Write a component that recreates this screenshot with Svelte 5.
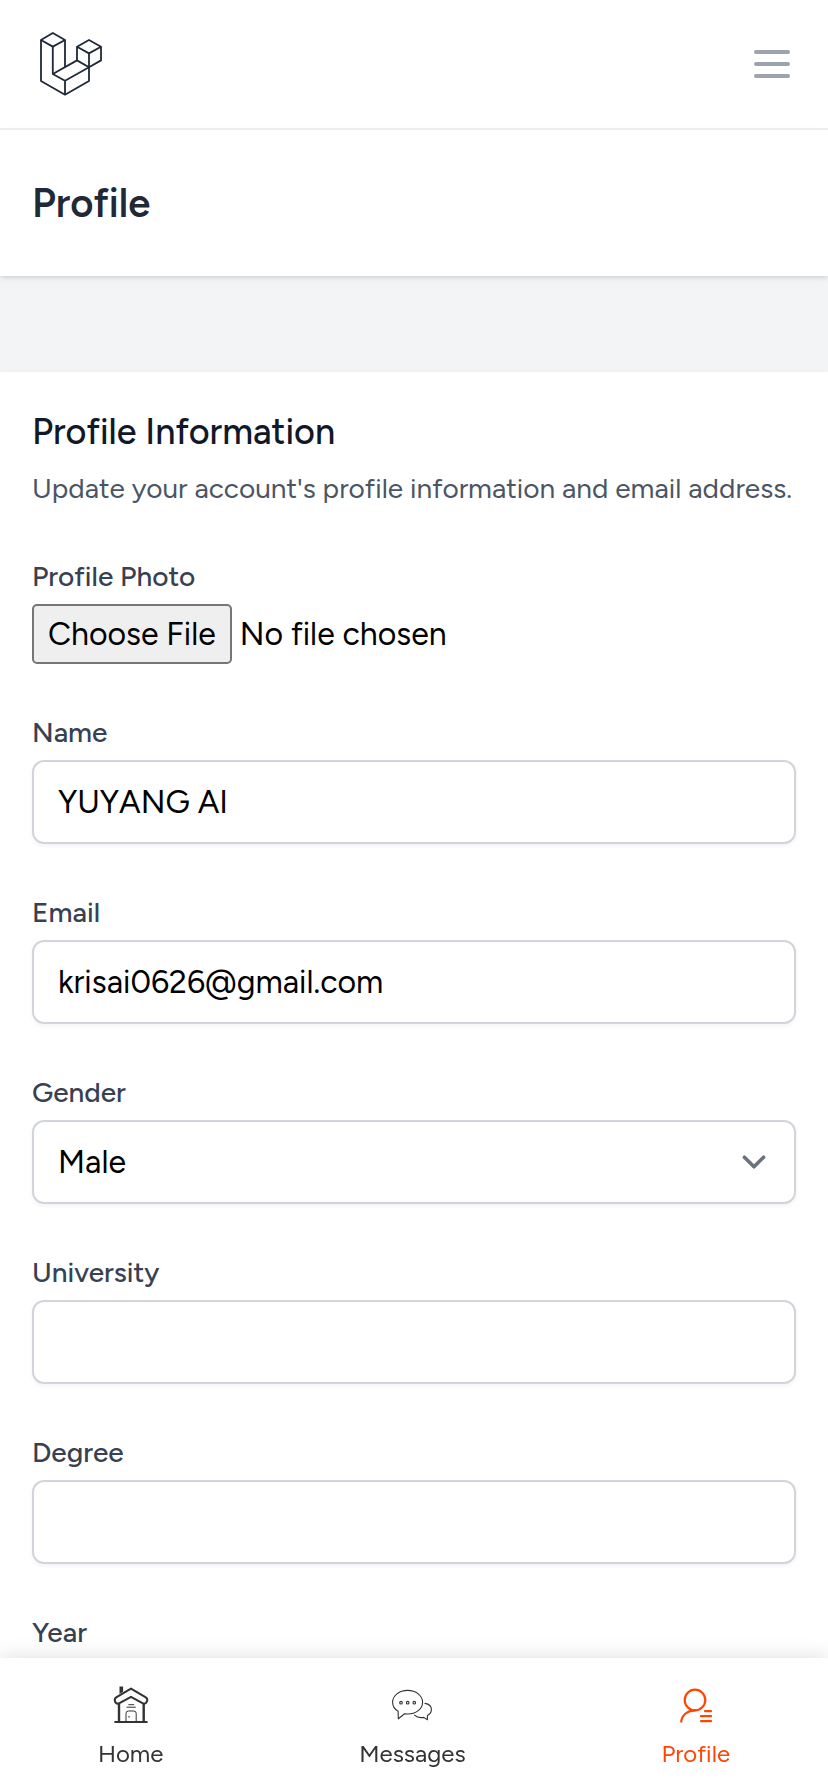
<script>
    let menuOpen = false;

    let name = "YUYANG AI";
    let email = "krisai0626@gmail.com";
    let gender = "Male";
    let university = "";
    let degree = "";
    let year = "";

    function toggleMenu() {
        menuOpen = !menuOpen;
    }
</script>

<div class="page">
    <nav class="topNav">
        <a class="logo" href="/" aria-label="Dashboard">
            <svg viewBox="0 0 72 72" width="72" height="72" fill="none" stroke="#1f2937" stroke-width="1.8" stroke-linejoin="round">
                <path d="M9 12 L20.8 5 L33 12 L20.8 18.6 Z" />
                <path d="M9 12 V53 L33 66.7 L57 53 V39.2" />
                <path d="M20.8 18.6 V46 L33 52.8 V66.7" />
                <path d="M33 12 V39" />
                <path d="M20.8 46 L45 32.4 L57 39.2 L33 52.8" />
                <path d="M45 32.4 V18.8 L57 12 L69 18.8 V32.4 L57 39.2 V25.4" />
                <path d="M45 18.8 L57 25.4 L69 18.8" />
            </svg>
        </a>
        <button class="menuBtn" type="button" aria-label="Menu" aria-expanded={menuOpen} on:click={toggleMenu}>
            <svg viewBox="0 0 24 24" width="48" height="48" fill="none" stroke="#9ca3af" stroke-width="2" stroke-linecap="round">
                <path d="M4 6h16M4 12h16M4 18h16" />
            </svg>
        </button>
    </nav>

    <header class="header">
        <h1>Profile</h1>
    </header>

    <main>
        <section class="card">
            <h2>Profile Information</h2>
            <p class="intro">Update your account's profile information and email address.</p>

            <form on:submit|preventDefault>
                <div class="field">
                    <label for="photo">Profile Photo</label>
                    <input class="file" id="photo" type="file" accept="image/*">
                </div>
                <div class="field">
                    <label for="name">Name</label>
                    <input class="control" id="name" type="text" bind:value={name}>
                </div>
                <div class="field">
                    <label for="email">Email</label>
                    <input class="control" id="email" type="email" bind:value={email}>
                </div>
                <div class="field">
                    <label for="gender">Gender</label>
                    <div class="selectWrap">
                        <select class="control" id="gender" bind:value={gender}>
                            <option>Male</option>
                            <option>Female</option>
                        </select>
                        <svg class="chevron" viewBox="0 0 20 20" width="48" height="48" fill="none" stroke="#6b7280" stroke-width="1.5" stroke-linecap="round" stroke-linejoin="round">
                            <path d="M6 8l4 4 4-4" />
                        </svg>
                    </div>
                </div>
                <div class="field">
                    <label for="university">University</label>
                    <input class="control" id="university" type="text" bind:value={university}>
                </div>
                <div class="field">
                    <label for="degree">Degree</label>
                    <input class="control" id="degree" type="text" bind:value={degree}>
                </div>
                <div class="field">
                    <label for="year">Year</label>
                    <input class="control" id="year" type="text" bind:value={year}>
                </div>
            </form>
        </section>
    </main>

    <nav class="bottomNav">
        <a href="/home">
            <svg viewBox="0 0 40 40" width="40" height="40" fill="none" stroke="#333" stroke-width="2" stroke-linejoin="round">
                <path d="M8.5 2.5h3.6v5.2l-3.6 2.2z" fill="#333" stroke="none" />
                <path d="M20 4.6 L34.8 13.4 C37.6 15.2 36 20.2 32.4 19.6 L20 12.8 L7.6 19.6 C4 20.2 2.4 15.2 5.2 13.4 Z" />
                <path d="M8 20v18M32.7 20v18" stroke-width="2.4" />
                <path d="M3.4 38h33.2" stroke-width="2.2" />
                <path d="M17.4 20.7h5.8M15.6 23.2h9.2" stroke-width="1" />
                <path d="M15 37.5V29.4Q15 27 17.4 27H22.8Q25.2 27 25.2 29.4V37.5" stroke-width="1" />
                <circle cx="18" cy="32.8" r="0.6" stroke-width="0.6" />
            </svg>
            <span>Home</span>
        </a>
        <a href="/messages">
            <svg viewBox="0 0 40 40" width="40" height="40" fill="none" stroke="#333" stroke-width="1.1" stroke-linejoin="round" stroke-linecap="round">
                <path d="M6.1 27.2 C2.6 25.2 0.6 21.8 0.6 18.2 C0.6 11.6 7.2 6.4 15.6 6.4 S30.6 11.6 30.6 18.2 S24 30 15.6 30 L12.6 29.7 L6.3 34.8 Z" />
                <path d="M33 19.4 C36.8 20 39.4 22.6 39.4 25.6 C39.4 28 38 30.2 35.4 31.4 L35.4 35.8 L31.8 33.4 C28 34 24.6 33.4 22.6 31.2" />
                <circle cx="9" cy="18.7" r="1.3" />
                <circle cx="15.7" cy="18.7" r="1.3" />
                <circle cx="22.3" cy="18.7" r="1.3" />
            </svg>
            <span>Messages</span>
        </a>
        <a class="active" href="/profile" aria-current="page">
            <svg viewBox="0 0 40 40" width="40" height="40" fill="none" stroke="#ff4500" stroke-width="2.2" stroke-linecap="round">
                <circle cx="19" cy="16" r="10.3" />
                <path d="M19 26.3 C11.6 26.3 6 31 5.2 37.6" />
                <path d="M29 27.1h6M25 32.2h10M25 37.2h10" />
            </svg>
            <span>Profile</span>
        </a>
    </nav>
</div>

<style>
    :global(body) {
        background-color: #f3f4f6;
    }

    .page {
        min-height: 100vh;
        font-family: Figtree, Lato, "Liberation Sans", sans-serif;
        color: #000;
    }

    .topNav {
        display: flex;
        align-items: center;
        justify-content: space-between;
        height: 128px;
        padding: 0 16px 0 32px;
        background-color: white;
        border-bottom: 2px solid #f0f1f3;
    }

    .logo {
        display: flex;
    }

    .menuBtn {
        display: flex;
        padding: 16px;
        border: none;
        border-radius: 12px;
        background: none;
        cursor: pointer;
    }

    .header {
        position: relative;
        padding: 48px 32px;
        background-color: white;
        box-shadow: 0 2px 6px rgba(0, 0, 0, 0.1), 0 2px 4px -2px rgba(0, 0, 0, 0.1);
    }

    h1 {
        margin: 0;
        font-size: 40px;
        line-height: 50px;
        font-weight: 600;
        color: #1f2937;
    }

    main {
        padding-top: 96px;
    }

    .card {
        padding: 32px;
        background-color: white;
        box-shadow: 0 2px 6px rgba(0, 0, 0, 0.06);
    }

    h2 {
        margin: 0;
        font-size: 36px;
        line-height: 56px;
        font-weight: 500;
        color: #111827;
    }

    .intro {
        margin: 8px 0 0;
        font-size: 28px;
        line-height: 40px;
        color: #4b5563;
    }

    form {
        display: flex;
        flex-direction: column;
        gap: 48px;
        margin-top: 48px;
    }

    .field {
        display: flex;
        flex-direction: column;
        gap: 8px;
    }

    label {
        font-size: 28px;
        line-height: 40px;
        font-weight: 500;
        color: #374151;
    }

    .file {
        height: 60px;
        font-family: inherit;
        font-size: 32px;
        line-height: 52px;
    }

    .file::file-selector-button {
        height: 60px;
        margin: 0 8px 0 0;
        padding: 2px 14px;
        border: 2px solid #767676;
        border-radius: 5px;
        background-color: #efefef;
        color: #000;
        font-family: inherit;
        font-size: 32px;
    }

    .control {
        box-sizing: border-box;
        width: 100%;
        height: 84px;
        padding: 0 24px;
        border: 2px solid #d1d5db;
        border-radius: 12px;
        background-color: white;
        box-shadow: 0 2px 4px rgba(0, 0, 0, 0.05);
        color: #000;
        font-family: inherit;
        font-size: 32px;
        appearance: none;
    }

    .control:focus {
        outline: none;
        border-color: #6366f1;
    }

    .selectWrap {
        position: relative;
    }

    .chevron {
        position: absolute;
        top: 18px;
        right: 18px;
        pointer-events: none;
    }

    .bottomNav {
        position: fixed;
        left: 0;
        right: 0;
        bottom: 0;
        display: flex;
        justify-content: space-around;
        padding: 26px 0 20px;
        background-color: white;
        box-shadow: 0 0 20px rgba(0, 0, 0, 0.14);
    }

    .bottomNav a {
        display: flex;
        flex-direction: column;
        align-items: center;
        gap: 12px;
        font-size: 24px;
        line-height: 36px;
        color: #333;
        text-decoration: none;
    }

    .bottomNav .active {
        color: #ff4500;
    }
</style>
